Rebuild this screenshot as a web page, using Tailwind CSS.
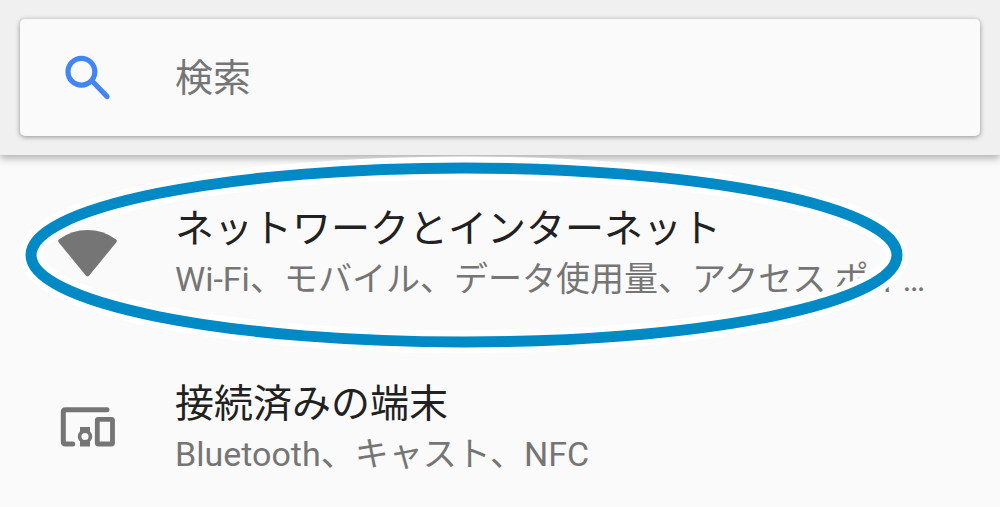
<!DOCTYPE html>
<html lang="ja">
  <head>
    <meta charset="UTF-8" />
    <meta name="viewport" content="width=device-width, initial-scale=1.0" />
    <title>設定</title>
    <script src="https://cdn.jsdelivr.net/npm/@tailwindcss/browser@4"></script>
  </head>
  <body class="bg-[#fafafa] min-h-screen overflow-x-hidden font-[Roboto,'Noto_Sans_CJK_JP',sans-serif]">
    <!-- Search bar -->
    <header class="bg-[#f0f0f0] px-5 py-[19px] shadow-[0_3px_8px_rgba(0,0,0,0.32)]">
      <label class="flex h-[117px] items-center rounded-[5px] bg-[#fafafa] shadow-[0_1px_5px_rgba(0,0,0,0.4)]">
        <span class="w-[155px] shrink-0 pl-[44px]">
          <svg class="size-12" viewBox="0 0 48 48" fill="none" stroke="#4285f4" aria-hidden="true">
            <circle cx="17.4" cy="17.7" r="13.4" stroke-width="5.2" />
            <path d="M27 26L31 30" stroke-width="5" />
            <path d="M31 30L43 42.5" stroke-width="5.2" stroke-linecap="round" />
          </svg>
        </span>
        <input type="search" aria-label="検索" placeholder="検索" class="h-16 min-w-0 flex-1 text-[38px] outline-none placeholder:text-[#757575]" />
      </label>
    </header>

    <!-- Settings list -->
    <main class="relative pt-[11px]">
      <a href="#network" class="flex h-[175px] items-center">
        <span class="w-[175px] shrink-0 pl-[58px]">
          <svg class="h-12 w-[60px]" viewBox="0 0 60 48" fill="#757575" aria-hidden="true">
            <path d="M1.2 9.2Q14 0 29.5 0T57.8 9.2Q59.6 10.6 58.2 12.5L31 45.7Q29.5 47.3 28 45.7L.8 12.5Q-.6 10.6 1.2 9.2Z" />
          </svg>
        </span>
        <span class="min-w-0 text-[34px] leading-[50px] text-[#757575] whitespace-nowrap">
          <span class="block text-[39px] text-[#212121]">ネットワークとインターネット</span>
          <span class="block">Wi-Fi、モバイル、データ使用量、アクセス ポイ…</span>
        </span>
      </a>
      <a href="#devices" class="flex h-[175px] items-center">
        <span class="w-[175px] shrink-0 pl-[60px]">
          <svg class="h-11 w-14" viewBox="0 0 56 44" fill="none" stroke="#757575" aria-hidden="true">
            <path d="M47 2.7H5.5Q3.3 2.7 3.3 5V34.5Q3.3 37 5.5 37H12.7" stroke-width="5" stroke-linecap="round" />
            <rect x="37.3" y="12.3" width="15.2" height="24.7" rx="1" stroke-width="4.8" />
            <path d="M20 20H30V25H20zM20 34H30V39.5H20z" fill="#757575" stroke="none" />
            <circle cx="25" cy="29.5" r="5.4" stroke-width="3.6" />
          </svg>
        </span>
        <span class="min-w-0 text-[34px] leading-[50px] text-[#757575] whitespace-nowrap">
          <span class="block text-[39px] text-[#212121]">接続済みの端末</span>
          <span class="block">Bluetooth、キャスト、NFC</span>
        </span>
      </a>
      <!-- Highlight ring around the first item -->
      <svg class="pointer-events-none absolute left-5 top-0 h-[200px] w-[888px]" viewBox="0 0 888 200" fill="none" aria-hidden="true">
        <ellipse cx="444" cy="100" rx="433" ry="87" stroke="#fff" stroke-width="23" />
        <ellipse cx="444" cy="100" rx="433" ry="87" stroke="#008ac5" stroke-width="11" />
      </svg>
    </main>
  </body>
</html>
